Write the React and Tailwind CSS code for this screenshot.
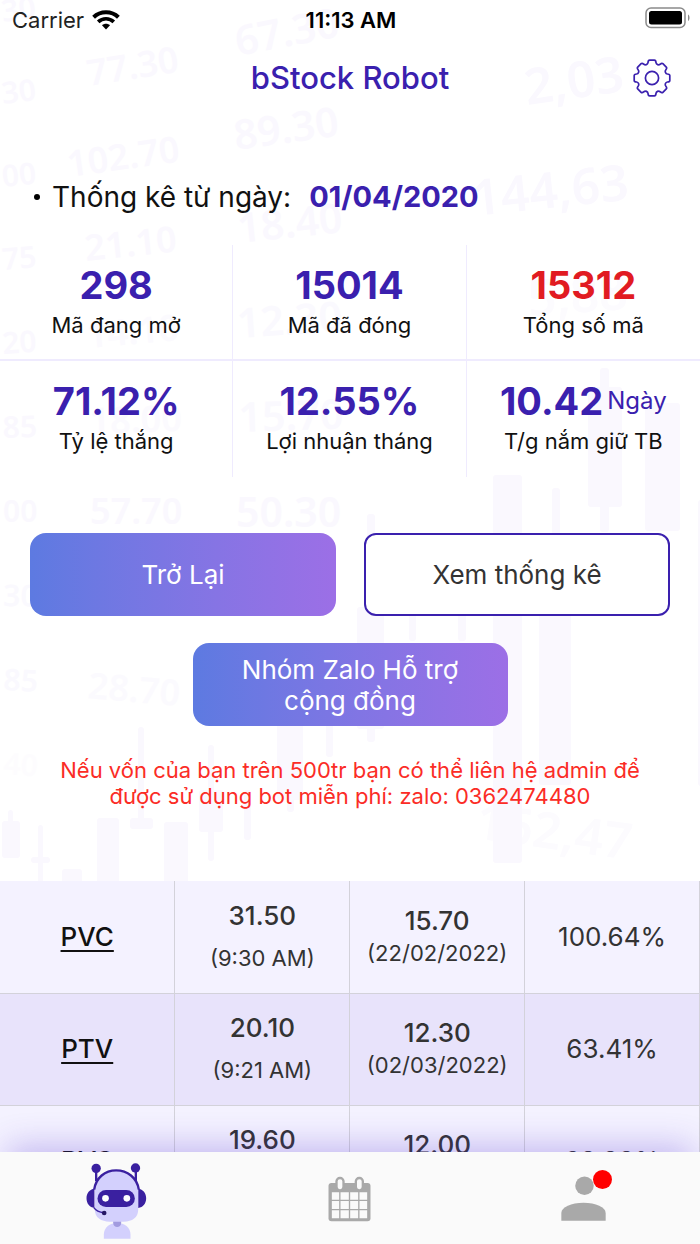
import React from 'react';

const STATS = [
  { value: '298', label: 'Mã đang mở' },
  { value: '15014', label: 'Mã đã đóng' },
  { value: '15312', label: 'Tổng số mã', red: true },
  { value: '71.12%', label: 'Tỷ lệ thắng' },
  { value: '12.55%', label: 'Lợi nhuận tháng' },
  { value: '10.42', unit: 'Ngày', label: 'T/g nắm giữ TB' },
];

const ROWS = [
  { code: 'PVC', price: '31.50', time: '(9:30 AM)', entry: '15.70', date: '(22/02/2022)', gain: '100.64%' },
  { code: 'PTV', price: '20.10', time: '(9:21 AM)', entry: '12.30', date: '(02/03/2022)', gain: '63.41%' },
  { code: 'BVS', price: '19.60', time: '(9:20 AM)', entry: '12.00', date: '(02/03/2022)', gain: '63.33%' },
];

// Ticker numbers of the backdrop: text, x, y, size, angle, opacity
const TICKERS = [
  ['30', 3, 22, 30, -8, 1], ['30', 3, 104, 30, -7, 1], ['00', 3, 187, 30, -6, 1],
  ['75', 3, 270, 30, -5, 1], ['20', 3, 354, 30, -4, 0.9], ['85', 3, 438, 30, -2, 0.9],
  ['00', 3, 522, 30, 0, 0.9], ['30', 3, 606, 30, 1, 0.8], ['85', 3, 690, 30, 3, 0.8], ['40', 3, 774, 30, 4, 0.3],
  ['77.30', 89, 86, 36, -9, 1], ['102.70', 69, 177, 36, -8, 1], ['21.10', 86, 261, 36, -6, 1],
  ['14.10', 88, 348, 36, -5, 0.7], ['18.00', 90, 434, 36, -2, 0.7], ['57.70', 90, 524, 36, 0, 0.9],
  ['28.70', 87, 698, 36, 5, 0.6],
  ['67.30', 238, 56, 41, -11, 1], ['89.30', 236, 150, 41, -8, 1], ['18.40', 239, 243, 41, -6, 1],
  ['12.30', 238, 338, 41, -4, 0.8], ['15.70', 239, 432, 41, -2, 0.8], ['50.30', 236, 527, 41, 0, 1],
  ['2,03', 527, 105, 50, -8, 1], ['144,63', 474, 216, 50, -6, 1], ['5,88', 529, 316, 50, -4, 0.5],
  ['162,47', 474, 838, 50, 8, 0.5],
];

// Candlesticks of the backdrop: x, y, width, height
const CANDLES = [
  [600, 368, 9, 164], [588, 387, 34, 120], [645, 403, 35, 128], [493, 475, 29, 388], [552, 488, 8, 130],
  [539, 612, 32, 173], [367, 514, 8, 228], [357, 607, 27, 122], [409, 560, 7, 81], [458, 560, 8, 81],
  [138, 727, 6, 96], [130, 818, 23, 11], [8, 810, 5, 14], [2, 821, 18, 37], [38, 825, 5, 70], [31, 857, 19, 6],
  [62, 869, 20, 40], [97, 818, 22, 80], [164, 822, 24, 80], [208, 745, 6, 116], [199, 790, 24, 42],
  [244, 790, 7, 50], [277, 700, 26, 100], [287, 780, 7, 32], [326, 700, 7, 57], [698, 500, 12, 286],
];

function Backdrop() {
  return (
    <svg aria-hidden="true" viewBox="0 0 700 1244" preserveAspectRatio="xMidYMin slice" className="absolute inset-0 -z-10 size-full">
      <g fill="#faf8fe" fontFamily="Noto Sans, sans-serif" fontWeight="600">
        {CANDLES.map(([x, y, w, h], i) => <rect key={i} x={x} y={y} width={w} height={h} rx="3" />)}
        {TICKERS.map(([t, x, y, size, angle, o], i) => (
          <text key={i} fontSize={size} opacity={o} transform={`translate(${x} ${y}) rotate(${angle})`}>{t}</text>
        ))}
      </g>
    </svg>
  );
}

function Wifi() {
  return (
    <svg aria-hidden="true" viewBox="0 0 28 20" className="h-5 w-7" fill="none" stroke="#000">
      <path d="M1.6 7.2C8.4.6 19.6.6 26.400 7.200" strokeWidth="4" />
      <path d="M6.200 11.800C10.600 7.700 17.400 7.700 21.800 11.800" strokeWidth="3.700" />
      <path d="M10 15.200c2.300-2 5.700-2 8 0l-4 4.300z" fill="#000" stroke="none" />
    </svg>
  );
}

function Battery() {
  return (
    <svg aria-hidden="true" viewBox="0 0 45 22" className="h-[22px] w-[45px]">
      <rect x="1" y="1" width="39" height="19.500" rx="5" fill="none" stroke="#8b8b8b" strokeWidth="1.500" />
      <rect x="4" y="4" width="33" height="13.500" rx="2.500" />
      <path d="M43 7.500c2 1 2 5.500 0 6.500z" fill="#8b8b8b" />
    </svg>
  );
}

function Gear() {
  const tooth = [[-5.6, -13.4], [-4.2, -14], [-4, -15.4], [-3.8, -17.8], [-2.4, -17.8], [2.4, -17.8], [3.8, -17.8], [4, -15.4], [4.2, -14], [5.6, -13.4]];
  const d = Array.from({ length: 8 }, (_, k) => {
    const a = (k * Math.PI) / 4;
    const p = tooth.map(([x, y]) => `${(x * Math.cos(a) - y * Math.sin(a)).toFixed(2)} ${(x * Math.sin(a) + y * Math.cos(a)).toFixed(2)}`);
    return `${k ? 'L' : 'M'}${p[0]}Q${p[1]} ${p[2]}Q${p[3]} ${p[4]}L${p[5]}Q${p[6]} ${p[7]}Q${p[8]} ${p[9]}`;
  }).join('');
  return (
    <svg aria-hidden="true" viewBox="-20 -20 40 40" className="size-10" fill="none" stroke="#3a20ae" strokeWidth="1.700" strokeLinejoin="round">
      <path d={d + 'Z'} />
      <circle r="6.600" />
    </svg>
  );
}

function Robot() {
  return (
    <svg aria-hidden="true" viewBox="80 70 182 228" className="h-[76px] w-[61px]">
      <path d="M133 297v-12c0-22 18-35 40-35s40 13 40 35v12z" fill="#d3d0fd" />
      <path d="M161 244h24v6c0 16-24 16-24 0z" fill="#a29bdf" />
      <path d="M110 88v36M229 88v36" stroke="#3a20a0" strokeWidth="7" />
      <circle cx="110" cy="86" r="14" fill="#3a20a0" />
      <circle cx="228" cy="85" r="14" fill="#3a20a0" />
      <path d="M105 147c-15 1-24 14-24 29s9 28 24 29zM236 147c15 1 24 14 24 29s-9 28-24 29z" fill="#3a20a0" />
      <path d="M106 150c5-35 32-56 65-56s60 21 65 56v61c0 22-18 35-43 35h-43c-25 0-44-13-44-35z" fill="#d3d0fd" />
      <path d="M104 150c5-36 33-58 66-58s63 22 68 58" fill="none" stroke="#3a20a0" strokeWidth="7" />
      <rect x="114" y="151" width="112" height="51" rx="25.500" fill="#3a20a0" />
      <circle cx="138" cy="176" r="10" fill="#fff" />
      <circle cx="202" cy="176" r="10" fill="#fff" />
      <path d="M103 204c6 9 17 14 31 16" fill="none" stroke="#3a20a0" strokeWidth="4" />
      <circle cx="134" cy="220" r="7" fill="#241765" />
    </svg>
  );
}

function Calendar() {
  return (
    <svg aria-hidden="true" viewBox="84 78 128 138" className="h-[46px] w-[43px]">
      <rect x="85" y="99" width="126" height="115" rx="9" fill="#a9a9a9" />
      <path d="M95 127h22v22H95zM121 127h25v22h-25zM150 127h24v22h-24zM178 127h23v22h-23zM95 153h22v24H95zM121 153h25v24h-25zM150 153h24v24h-24zM178 153h23v24h-23zM95 181h22v24H95zM121 181h25v24h-25zM150 181h24v24h-24zM178 181h23v24h-23z" fill="#fafafa" />
      <rect x="109" y="84" width="21" height="37" rx="10" fill="#fafafa" stroke="#a9a9a9" strokeWidth="7" />
      <rect x="167" y="84" width="21" height="37" rx="10" fill="#fafafa" stroke="#a9a9a9" strokeWidth="7" />
    </svg>
  );
}

function Person() {
  return (
    <svg aria-hidden="true" viewBox="782 78 136 138" className="h-[46px] w-[45px]" fill="#a9a9a9">
      <circle cx="853" cy="107" r="28" />
      <path d="M783 213v-24c0-18 30-31 67-31s67 13 67 31v24z" />
    </svg>
  );
}

const GRADIENT = 'bg-linear-to-r from-[#5d7ae1] to-[#9c6fe6] text-white';

export default function App() {
  return (
    <div className="relative isolate flex h-screen flex-col overflow-hidden bg-white font-['Inter',sans-serif] text-[#111]">
      <Backdrop />

      <div className="grid h-10 shrink-0 grid-cols-3 items-center pr-2.5 pl-3 text-[22px] leading-6 text-black">
        <div className="flex items-center gap-2 text-[#222]">Carrier <Wifi /></div>
        <div className="text-center font-semibold">11:13 AM</div>
        <div className="flex justify-end pb-1"><Battery /></div>
      </div>

      <header className="grid shrink-0 grid-cols-[40px_1fr_40px] items-center px-7 py-[18px] text-[#3a20ae]">
        <h1 className="col-start-2 text-center text-[31px] leading-10 font-medium">bStock Robot</h1>
        <button type="button" aria-label="Cài đặt"><Gear /></button>
      </header>

      <main className="min-h-0 flex-1 overflow-y-auto [scrollbar-width:none]">
        <p className="mt-[61px] flex items-center px-8 text-[28px] leading-10 whitespace-pre">
          <span className="mr-3 ml-0.5 size-1.5 rounded-full bg-black" />
          Thống kê từ ngày:<strong className="ml-[18px] text-[29px] font-bold text-[#3a20ae]">01/04/2020</strong>
        </p>

        <dl className="mt-7 grid grid-cols-3">
          {STATS.map((s, i) => (
            <div key={s.label} className={`flex h-[116px] flex-col-reverse justify-end border-[#efebfe] pt-[18px] text-center ${i < 3 ? 'border-b-2' : ''} ${i % 3 < 2 ? 'border-r' : ''}`}>
              <dt className="mt-0.5 text-[22px] leading-8">{s.label}</dt>
              <dd className={`flex items-center justify-center text-[38px] leading-11 font-bold ${s.red ? 'text-[#e11b22]' : 'text-[#3a20ae]'}`}>
                {s.value}
                {s.unit && <span className="ml-1 text-2xl font-normal">{s.unit}</span>}
              </dd>
            </div>
          ))}
        </dl>

        <div className="mt-14 grid grid-cols-2 gap-7 px-[30px] text-[26px] leading-[31px]">
          <button type="button" className={`h-[83px] rounded-2xl ${GRADIENT}`}>Trở Lại</button>
          <button type="button" className="h-[83px] rounded-xl border-2 border-[#3a20ae] bg-white text-[#333]">Xem thống kê</button>
        </div>
        <button type="button" className={`mx-auto mt-[27px] block h-[83px] w-[45%] rounded-2xl px-10 text-[26px] leading-[31px] ${GRADIENT}`}>
          Nhóm Zalo Hỗ trợ cộng đồng
        </button>

        <p className="mt-[31px] px-12 text-center text-[22px] leading-[26px] text-[#fb2c26]">
          Nếu vốn của bạn trên 500tr bạn có thể liên hệ admin để được sử dụng bot miễn phí: zalo: 0362474480
        </p>

        <table className="mt-[72px] w-full table-fixed border-collapse text-center text-[26px] leading-[30px] text-[#333]">
          <tbody>
            {ROWS.map((r) => (
              <tr key={r.code} className="h-28 border-b border-[#d3d2da] bg-[#f4f2ff] even:bg-[#e8e3fb]">
                <th scope="row" className="border-r border-[#d3d2da] font-medium text-[#111]">
                  <a href={`#${r.code}`} className="underline decoration-2 underline-offset-4">{r.code}</a>
                </th>
                <td className="border-r border-[#d3d2da]">
                  <div className="mb-3 font-medium">{r.price}</div>
                  <div className="text-[22px]">{r.time}</div>
                </td>
                <td className="border-r border-[#d3d2da]">
                  <div className="font-medium">{r.entry}</div>
                  <div className="mt-0.5 text-[22px]">{r.date}</div>
                </td>
                <td className="border-r border-[#d3d2da]">{r.gain}</td>
              </tr>
            ))}
          </tbody>
        </table>
      </main>

      <nav className="relative grid h-[92px] shrink-0 grid-cols-3 items-center justify-items-center bg-[#fafafa] pt-0.5 shadow-[0_-14px_32px_-8px_rgba(84,50,205,0.3)]">
        <a href="#robot" aria-label="Robot" className="pt-1"><Robot /></a>
        <a href="#lich" aria-label="Lịch"><Calendar /></a>
        <a href="#tai-khoan" aria-label="Tài khoản" className="relative">
          <Person />
          <span className="absolute -top-1.5 -right-1.5 size-[19px] rounded-full bg-[#ff0000]" />
        </a>
      </nav>
    </div>
  );
}
